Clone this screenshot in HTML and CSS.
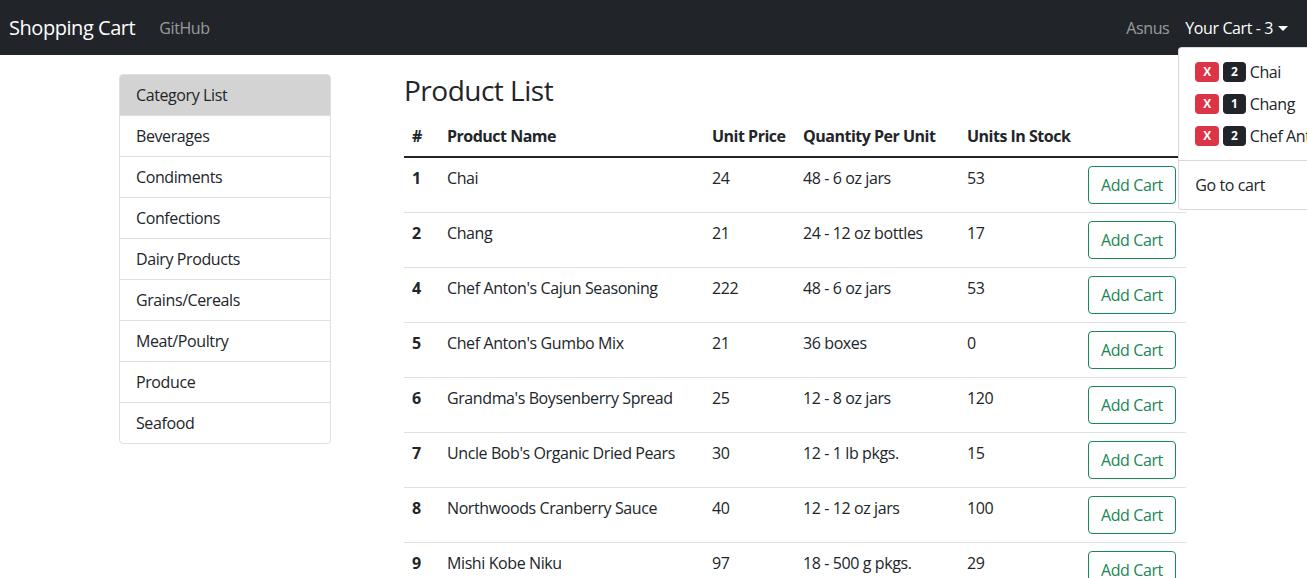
FILE: index.html
```html
<!DOCTYPE html>
<html lang="en">
<head>
<meta charset="utf-8">
<title>Shopping Cart</title>
<link rel="stylesheet" href="styles.css">
</head>
<body>
<nav class="navbar">
  <div class="nav-left">
    <a class="brand" href="#">Shopping Cart</a>
    <a class="nav-link" href="#">GitHub</a>
  </div>
  <ul class="nav-right">
    <li><a class="nav-link" href="#">Asnus</a></li>
    <li class="dropdown">
      <a class="nav-link active" href="#">Your Cart - 3<span class="caret"></span></a>
      <div class="dropdown-menu">
        <div class="dropdown-item"><span class="badge badge-danger">X</span> <span class="badge badge-dark">2</span> Chai</div>
        <div class="dropdown-item"><span class="badge badge-danger">X</span> <span class="badge badge-dark">1</span> Chang</div>
        <div class="dropdown-item"><span class="badge badge-danger">X</span> <span class="badge badge-dark">2</span> Chef Anton's Cajun Seasoning</div>
        <div class="dropdown-divider"></div>
        <div class="dropdown-item">Go to cart</div>
      </div>
    </li>
  </ul>
</nav>

<main class="main">
  <aside class="sidebar">
    <ul class="list-group">
      <li class="list-item list-head">Category List</li>
      <li class="list-item">Beverages</li>
      <li class="list-item">Condiments</li>
      <li class="list-item">Confections</li>
      <li class="list-item">Dairy Products</li>
      <li class="list-item">Grains/Cereals</li>
      <li class="list-item">Meat/Poultry</li>
      <li class="list-item">Produce</li>
      <li class="list-item">Seafood</li>
    </ul>
  </aside>
  <section class="content">
    <h3 class="title">Product List</h3>
    <table class="table">
      <thead>
        <tr>
          <th class="c-id">#</th>
          <th class="c-name">Product Name</th>
          <th class="c-price">Unit Price</th>
          <th class="c-qty">Quantity Per Unit</th>
          <th class="c-stock">Units In Stock</th>
          <th class="c-btn"></th>
        </tr>
      </thead>
      <tbody>
        <tr><th>1</th><td>Chai</td><td>24</td><td>48 - 6 oz jars</td><td>53</td><td><button class="btn">Add Cart</button></td></tr>
        <tr><th>2</th><td>Chang</td><td>21</td><td>24 - 12 oz bottles</td><td>17</td><td><button class="btn">Add Cart</button></td></tr>
        <tr><th>4</th><td>Chef Anton's Cajun Seasoning</td><td>222</td><td>48 - 6 oz jars</td><td>53</td><td><button class="btn">Add Cart</button></td></tr>
        <tr><th>5</th><td>Chef Anton's Gumbo Mix</td><td>21</td><td>36 boxes</td><td>0</td><td><button class="btn">Add Cart</button></td></tr>
        <tr><th>6</th><td>Grandma's Boysenberry Spread</td><td>25</td><td>12 - 8 oz jars</td><td>120</td><td><button class="btn">Add Cart</button></td></tr>
        <tr><th>7</th><td>Uncle Bob's Organic Dried Pears</td><td>30</td><td>12 - 1 lb pkgs.</td><td>15</td><td><button class="btn">Add Cart</button></td></tr>
        <tr><th>8</th><td>Northwoods Cranberry Sauce</td><td>40</td><td>12 - 12 oz jars</td><td>100</td><td><button class="btn">Add Cart</button></td></tr>
        <tr><th>9</th><td>Mishi Kobe Niku</td><td>97</td><td>18 - 500 g pkgs.</td><td>29</td><td><button class="btn">Add Cart</button></td></tr>
        <tr><th>10</th><td>Ikura</td><td>31</td><td>12 - 200 ml jars</td><td>31</td><td><button class="btn">Add Cart</button></td></tr>
      </tbody>
    </table>
  </section>
</main>
</body>
</html>
```

FILE: styles.css
```css
* { box-sizing: border-box; }
html, body { overflow: hidden; }
body {
  margin: 0;
  font-family: "Open Sans", "Noto Sans", "Liberation Sans", sans-serif;
  font-size: 16px;
  line-height: 1.5;
  letter-spacing: -0.4px;
  color: #212529;
  background: #fff;
}
a { text-decoration: none; }

.navbar {
  position: relative;
  z-index: 10;
  height: 55px;
  background: #212529;
  display: flex;
  align-items: center;
  justify-content: space-between;
  padding: 0 11px 0 9px;
}
.nav-left { display: flex; align-items: center; }
.brand {
  color: #fff;
  font-size: 20px;
  line-height: 30px;
  letter-spacing: -0.45px;
  margin-right: 16px;
}
.nav-link {
  display: block;
  color: rgba(255,255,255,.55);
  padding: 8px;
  line-height: 24px;
}
.nav-link.active { color: #fff; }
.nav-right {
  list-style: none;
  margin: 0;
  padding: 0;
  display: flex;
  align-items: center;
}
.dropdown { position: relative; }
.caret {
  display: inline-block;
  margin-left: 5px;
  vertical-align: 3px;
  border-top: 5px solid #fff;
  border-left: 5px solid transparent;
  border-right: 5px solid transparent;
}
.dropdown-menu {
  position: absolute;
  top: 39px;
  left: 1px;
  min-width: 160px;
  padding: 8px 0;
  background: #fff;
  border: 1px solid rgba(0,0,0,.15);
  border-radius: 4px;
  white-space: nowrap;
  color: #212529;
}
.dropdown-item {
  padding: 4px 16px;
  line-height: 24px;
}
.dropdown-divider {
  margin: 8px 0;
  border-top: 1px solid rgba(0,0,0,.15);
}
.badge {
  display: inline-block;
  padding: 4px 8px;
  font-size: 12px;
  font-weight: 700;
  line-height: 1;
  letter-spacing: 0;
  color: #fff;
  border-radius: 4px;
  vertical-align: 2px;
}
.badge-danger { background: #dc3545; }
.badge-dark { background: #212529; }

.main {
  display: flex;
  align-items: flex-start;
  gap: 73px;
  padding: 19px 0 0 119px;
}
.sidebar { width: 212px; flex: none; }
.list-group {
  list-style: none;
  margin: 0;
  padding: 0;
  border: 1px solid rgba(0,0,0,.125);
  border-radius: 4px;
  overflow: hidden;
}
.list-item {
  padding: 8px 16px;
  line-height: 24px;
  border-top: 1px solid rgba(0,0,0,.125);
}
.list-item:first-child { border-top: none; }
.list-head { background: #d3d3d3; }

.content { width: 782px; flex: none; }
.title {
  margin: 0 0 8px;
  font-size: 28px;
  font-weight: 500;
  line-height: 1.2;
  letter-spacing: -0.5px;
}
.table {
  width: 100%;
  border-collapse: collapse;
  vertical-align: top;
}
.table th, .table td {
  padding: 8px;
  text-align: left;
  vertical-align: top;
  white-space: nowrap;
  border-bottom: 1px solid #dee2e6;
}
.table th { font-weight: 700; letter-spacing: -0.5px; }
.table thead th { border-bottom: 2px solid #212529; }
.c-id { width: 35px; }
.c-name { width: 265px; }
.c-price { width: 91px; }
.c-qty { width: 164px; }
.c-stock { width: 121px; }
.c-btn { width: 106px; }
.btn {
  font-family: inherit;
  font-size: 16px;
  line-height: 24px;
  letter-spacing: -0.4px;
  padding: 6px 12px;
  color: #198754;
  background: transparent;
  border: 1px solid #198754;
  border-radius: 4px;
  white-space: nowrap;
}
```
